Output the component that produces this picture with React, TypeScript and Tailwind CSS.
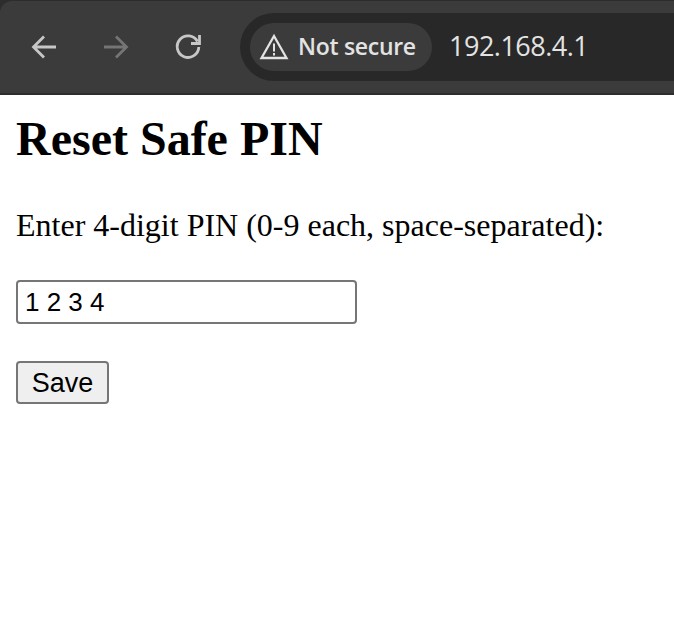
import { useState } from 'react'

export default function App() {
  const [pin, setPin] = useState('1 2 3 4')

  return (
    <div className="min-h-[630px] bg-white overflow-hidden">
      <div className="h-[95px] bg-[#2d2d2d] pt-[1px]">
        <div className="h-[92px] bg-[#3b3b3b] rounded-tl-[12px] flex items-center pl-[20px]">
          <div className="flex items-center">
            <svg className="w-[48px] h-[48px]" viewBox="0 0 48 48" fill="none" stroke="#c7c7c7" strokeWidth="2.800">
              <path d="M36 24H14M24 13.500 13.500 24 24 34.500" />
            </svg>
            <svg className="w-[48px] h-[48px] ml-[24px]" viewBox="0 0 48 48" fill="none" stroke="#757575" strokeWidth="2.800">
              <path d="M12 24h22M24 13.500 34.500 24 24 34.500" />
            </svg>
            <svg className="w-[48px] h-[48px] ml-[24px]" viewBox="0 0 48 48" fill="none" stroke="#c7c7c7" strokeWidth="2.800">
              <path d="M33.500 18.500A10.800 10.800 0 1 0 34.800 24" />
              <path d="M35.500 12v8.500H27" />
            </svg>
          </div>
          <div className="ml-[28px] flex-1 h-[68px] bg-[#282828] rounded-l-[34px] flex items-center pl-[10px] -mt-[1px]">
            <div className="h-[48px] w-[182px] bg-[#3b3b3b] rounded-[24px] flex items-center pl-[9px]">
              <svg className="w-[30px] h-[30px] shrink-0" viewBox="0 0 30 30" fill="none" stroke="#e3e3e3" strokeWidth="2.300">
                <path d="M15 4 2.500 26h25z" strokeLinejoin="miter" />
                <path d="M15 11.500v8M15 21v2.500" strokeWidth="2" />
              </svg>
              <span className="ml-[9px] text-[23px] font-semibold text-[#e3e3e3] font-['Open_Sans',sans-serif] whitespace-nowrap tracking-[-0.3px]">Not secure</span>
            </div>
            <span className="ml-[17px] text-[27px] tracking-[-0.5px] text-[#e3e3e3] font-['Open_Sans',sans-serif]">192.168.4.1</span>
          </div>
        </div>
      </div>
      <div className="px-[16px] font-['Liberation_Serif',serif] text-black">
        <h1 className="text-[48px] leading-[55px] font-bold mt-[16px]">Reset Safe PIN</h1>
        <form className="mt-[41px]">
          <label className="block text-[32px] leading-[37px]">Enter 4-digit PIN (0-9 each, space-separated):</label>
          <input
            value={pin}
            onChange={e => setPin(e.target.value)}
            className="block mt-[36px] w-[341px] h-[44px] border-2 border-[#767676] rounded-[4px] px-[7px] text-[26px] font-['Liberation_Sans',sans-serif] text-black"
          />
          <button
            type="button"
            className="block mt-[37px] w-[93px] h-[43px] border-2 border-[#767676] rounded-[4px] bg-[#efefef] pb-[2px] text-[27px] font-['Liberation_Sans',sans-serif] text-black"
          >
            Save
          </button>
        </form>
      </div>
    </div>
  )
}
